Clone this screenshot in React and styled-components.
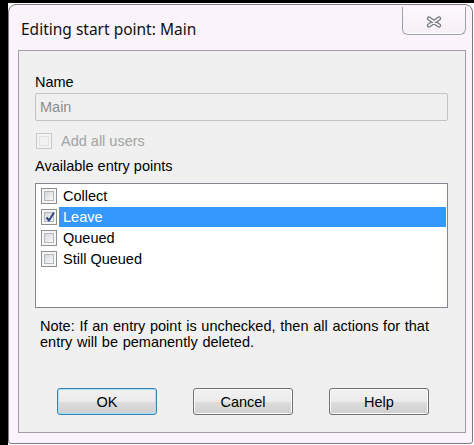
import React from "react";
import styled, { createGlobalStyle } from "styled-components";

const GlobalStyle = createGlobalStyle`
  html, body { margin: 0; padding: 0; background: #fff; }
  body { font-family: "Liberation Sans", Arial, sans-serif; }
  *, *::before, *::after { box-sizing: border-box; }
`;

const Screen = styled.div`
  width: 474px;
  height: 445px;
  border-top: 3px solid #000;
  border-left: 8px solid #000;
  padding-top: 1px;
  background: #fff;
  overflow: hidden;
`;

const Window = styled.div`
  width: 465px;
  height: 440px;
  background: #fbf3fb;
  border: 1px solid #7d7d7d;
  border-radius: 8px 8px 3px 3px;
  padding: 0 6px 10px 9px;
  display: flex;
  flex-direction: column;
`;

const TitleBar = styled.div`
  height: 45px;
  flex: none;
  display: flex;
  justify-content: space-between;
  align-items: flex-start;
`;

const Title = styled.div`
  margin: 14px 0 0 3px;
  font-family: "Noto Sans", "Open Sans", sans-serif;
  font-size: 15.5px;
  line-height: 20px;
  color: #111;
`;

const CloseButton = styled.div`
  margin-top: 2px;
  width: 64px;
  height: 28px;
  border: 1px solid #9ea2a8;
  border-top: none;
  border-radius: 0 0 6px 6px;
  background: linear-gradient(#fdf8fd, #f6f0f6);
  box-shadow: inset 0 -1px 0 #ffffff;
  display: flex;
  align-items: center;
  justify-content: center;
  padding-top: 2px;
`;

const Panel = styled.div`
  flex: 1;
  background: #f0f0f0;
  border: 1px solid #a0a0a0;
  padding: 23px 17px 17px 16px;
  display: flex;
  flex-direction: column;
  font-size: 14.5px;
  line-height: 16px;
  color: #000;
`;

const Label = styled.div`
  height: 16px;
  margin-top: ${(p) => p.$gap || 0}px;
  color: ${(p) => (p.$disabled ? "#a3a3a3" : "#000")};
  white-space: nowrap;
`;

const TextBox = styled.div`
  margin-top: 3px;
  height: 28px;
  border: 1px solid #c3c3c3;
  border-radius: 2px;
  background: #f0f0f0;
  padding-left: 4px;
  display: flex;
  align-items: center;
  color: #8c8c8c;
`;

const CheckRow = styled.div`
  margin-top: 12px;
  height: 16px;
  display: flex;
  align-items: center;
  gap: 9px;
  padding-left: 1px;
`;

const Box = styled.span`
  width: 16px;
  height: 16px;
  flex: none;
  border: 1px solid ${(p) => (p.$disabled ? "#c9c9c9" : "#8e8f8f")};
  background: ${(p) => (p.$disabled ? "#f4f4f4" : "#f6f6f6")};
  padding: 2px;
  display: flex;
`;

const BoxInner = styled.span`
  flex: 1;
  position: relative;
  border: 1px solid ${(p) => (p.$disabled ? "#e2e2e2" : "#b4b8bc")};
  background: ${(p) =>
    p.$disabled
      ? "#f2f2f2"
      : "linear-gradient(135deg, #d4d6d9 0%, #e9eaeb 55%, #fbfbfb 100%)"};
`;

const Tick = styled.svg`
  position: absolute;
  left: -2px;
  top: -3px;
`;

const ListBox = styled.div`
  margin-top: 9px;
  height: 125px;
  flex: none;
  border: 1px solid #828790;
  background: #fff;
  padding-top: 1px;
  display: flex;
  flex-direction: column;
`;

const Item = styled.div`
  height: 21px;
  display: flex;
  align-items: center;
  padding: 0 1px 0 5px;
`;

const ItemText = styled.span`
  flex: 1;
  height: 20px;
  margin-left: 2px;
  padding-left: 4px;
  line-height: 20px;
  background: ${(p) => (p.$selected ? "#3399ff" : "transparent")};
  color: ${(p) => (p.$selected ? "#fff" : "#000")};
`;

const Note = styled.p`
  margin: 10px 0 0 5px;
  line-height: 16px;
  word-spacing: 0.7px;
`;

const ButtonRow = styled.div`
  margin-top: auto;
  display: flex;
  gap: 36px;
  padding-left: 22px;
`;

const Button = styled.div`
  width: 100px;
  height: 27px;
  border: 1px solid ${(p) => (p.$default ? "#3c7fb1" : "#707070")};
  border-radius: 3px;
  background: linear-gradient(#f2f2f2 0%, #ebebeb 50%, #dddddd 51%, #cfcfcf 100%);
  box-shadow: inset 0 0 0 1px ${(p) => (p.$default ? "#9ee4fb" : "#fbfbfb")};
  display: flex;
  align-items: center;
  justify-content: center;
  color: #000;
`;

function CheckBox({ checked, disabled }) {
  return (
    <Box $disabled={disabled}>
      <BoxInner $disabled={disabled}>
        {checked && (
          <Tick width="14" height="14" viewBox="0 0 14 14">
            <path
              d="M3.5 7.5 L6 10.5 L11 2.5"
              fill="none"
              stroke="#2f4589"
              strokeWidth="2"
              strokeLinejoin="round"
            />
          </Tick>
        )}
      </BoxInner>
    </Box>
  );
}

const entries = [
  { name: "Collect", checked: false },
  { name: "Leave", checked: true, selected: true },
  { name: "Queued", checked: false },
  { name: "Still Queued", checked: false },
];

export default function App() {
  return (
    <>
      <GlobalStyle />
      <Screen>
        <Window>
          <TitleBar>
            <Title>Editing start point: Main</Title>
            <CloseButton>
              <svg width="16" height="12" viewBox="0 0 16 12">
                <path
                  d="M3 2.5 L13 9.5 M13 2.5 L3 9.5"
                  stroke="#73777d"
                  strokeWidth="4.2"
                  strokeLinecap="round"
                />
                <path
                  d="M3 2.5 L13 9.5 M13 2.5 L3 9.5"
                  stroke="#f4f4f6"
                  strokeWidth="1.8"
                  strokeLinecap="round"
                />
              </svg>
            </CloseButton>
          </TitleBar>
          <Panel>
            <Label>Name</Label>
            <TextBox>Main</TextBox>
            <CheckRow>
              <CheckBox disabled />
              <Label $disabled>Add all users</Label>
            </CheckRow>
            <Label $gap={9}>Available entry points</Label>
            <ListBox>
              {entries.map((e) => (
                <Item key={e.name}>
                  <CheckBox checked={e.checked} />
                  <ItemText $selected={e.selected}>{e.name}</ItemText>
                </Item>
              ))}
            </ListBox>
            <Note>
              Note: If an entry point is unchecked, then all actions for that
              <br />
              entry will be pemanently deleted.
            </Note>
            <ButtonRow>
              <Button $default>OK</Button>
              <Button>Cancel</Button>
              <Button>Help</Button>
            </ButtonRow>
          </Panel>
        </Window>
      </Screen>
    </>
  );
}
